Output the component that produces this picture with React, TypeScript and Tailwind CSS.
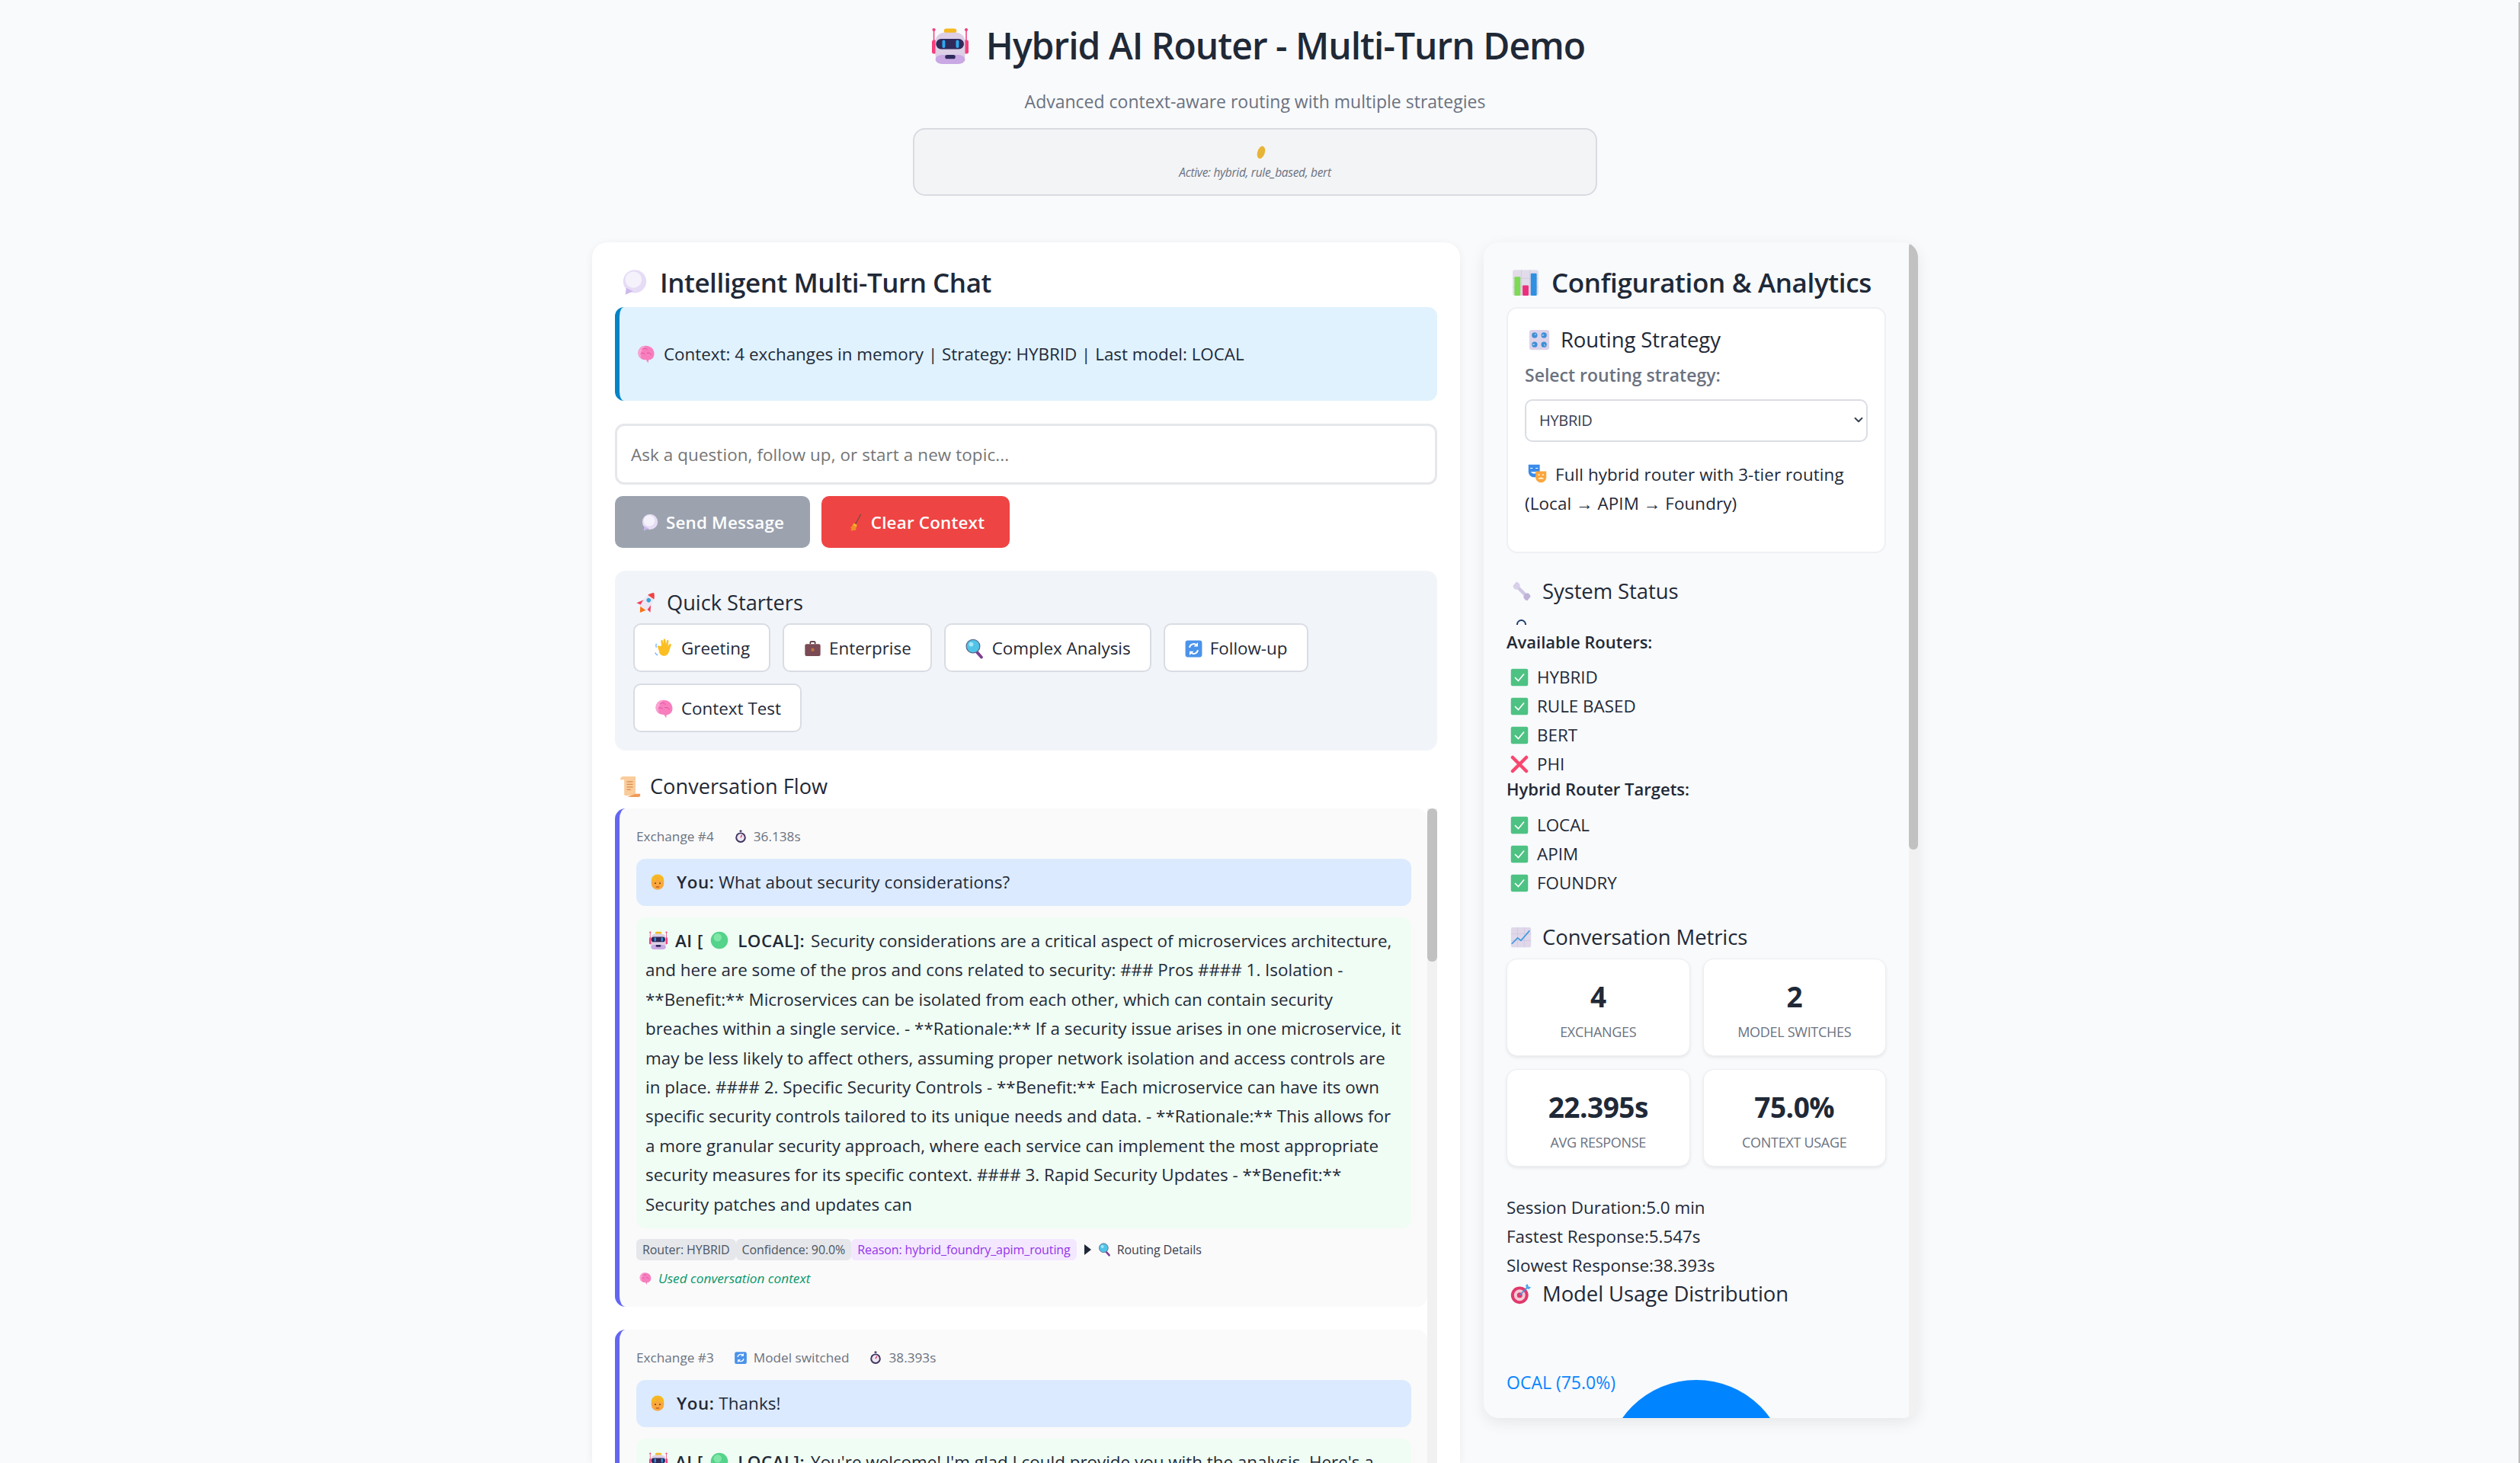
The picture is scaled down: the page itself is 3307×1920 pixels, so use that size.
import React from 'react';
import { ChevronDown } from 'lucide-react';

type IconProps = { s?: number };

const Svg = ({ s = 24, children }: { s?: number; children: React.ReactNode }) => (
  <svg width={s} height={s} viewBox="0 0 32 32" className="inline-block shrink-0 align-[-0.14em]">
    {children}
  </svg>
);

const Robot = ({ s }: IconProps) => (
  <Svg s={s}>
    <path d="M1.7 2v12M30 2v12" stroke="#f43f7a" strokeWidth="1" />
    <circle cx="1.7" cy="2" r="1.4" fill="#f43f7a" />
    <circle cx="30" cy="2" r="1.4" fill="#f43f7a" />
    <rect x="0" y="11" width="4" height="12" rx="1.5" fill="#f43f7a" />
    <rect x="28" y="11" width="4" height="12" rx="1.5" fill="#f43f7a" />
    <rect x="10.5" y="1" width="11" height="4" rx="2" fill="#f5b921" />
    <rect x="3" y="4.5" width="26" height="27.5" rx="8" fill="#dccfe6" />
    <rect x="3" y="24" width="26" height="8" rx="6" fill="#c9a8e4" />
    <rect x="3.5" y="10" width="24.5" height="9" rx="4.5" fill="#2f2a5a" />
    <rect x="9" y="11" width="2.6" height="7" rx="1.3" fill="#2ea8ee" />
    <rect x="21" y="11" width="2.6" height="7" rx="1.3" fill="#2ea8ee" />
    <rect x="11.5" y="24" width="9" height="3.5" rx="1.7" fill="#2f2a5a" />
  </Svg>
);

const Bubble = ({ s }: IconProps) => (
  <Svg s={s}>
    <circle cx="16" cy="14.5" r="13.5" fill="#e6dcf6" />
    <circle cx="14.5" cy="12.5" r="9.5" fill="#f6f2fc" />
    <path d="M6 22l-1 8 9-4z" fill="#cdb9ec" />
  </Svg>
);

const Brain = ({ s }: IconProps) => (
  <Svg s={s}>
    <path d="M15 2c8 0 14 5 14 13 0 6-4 10-9 10l-1 5-3-5C8 25 3 20 3 14 3 7 8 2 15 2z" fill="#f77fbe" />
    <path d="M15 2c-7 0-12 5-12 12 0 4 2 7 5 9-2-6 0-15 7-21z" fill="#f9a3d2" />
    <path d="M9 8c3-2 7-2 9 1M7 15c3-2 5-1 7 1M17 14c3-1 6 0 7 3" stroke="#e0489a" strokeWidth="1.1" fill="none" />
  </Svg>
);

const Broom = ({ s }: IconProps) => (
  <Svg s={s}>
    <path d="M25 1L15 19" stroke="#6d4c41" strokeWidth="1.6" />
    <path d="M13 17l5 3-2 9-9 1 2-5-3 1z" fill="#f28c28" />
    <path d="M13 17l5 3-1 3-6-3z" fill="#f5b921" />
  </Svg>
);

const Rocket = ({ s }: IconProps) => (
  <Svg s={s}>
    <g transform="rotate(35 16 16)">
      <path d="M16 32l-5-8h10z" fill="#f97316" />
      <path d="M11 14l-6 10 6-1zM21 14l6 10-6-1z" fill="#f43f5e" />
      <path d="M16 0c6 5 7 15 5 25H11C9 15 10 5 16 0z" fill="#ece7f3" />
      <path d="M16 0c2.500 2 4 4.500 5 7H11c1-2.500 2.500-5 5-7z" fill="#ef4444" />
      <circle cx="16" cy="12" r="2.800" fill="#38a3dc" />
    </g>
  </Svg>
);

const Wave = ({ s }: IconProps) => (
  <Svg s={s}>
    <path d="M12 11l-1-7c0-2 3-2 3 0l1 5 0-7c0-2 3-2 3 0l1 7 1-5c0-2 3-2 3 0l-1 8 2-3c1-2 3-1 3 1l-3 9c-1 5-4 8-8 8s-8-3-8-8l-2-6c-1-2 2-3 3-1z" fill="#fbbf24" />
    <path d="M4 8C3 10 3 12 4 14M2 22c1 2 2 3 4 4" stroke="#60a5fa" strokeWidth="1.4" fill="none" />
  </Svg>
);

const Case = ({ s }: IconProps) => (
  <Svg s={s}>
    <path d="M11 8V5c0-1 1-2 2-2h6c1 0 2 1 2 2v3h-2V5h-6v3z" fill="#4b3038" />
    <rect x="3" y="8" width="26" height="20" rx="2.500" fill="#7a4a55" />
    <rect x="13.500" y="15" width="5" height="5" rx="1" fill="#c0743c" />
  </Svg>
);

const Lens = ({ s }: IconProps) => (
  <Svg s={s}>
    <path d="M18 20l8 9" stroke="#7b3f8f" strokeWidth="4.500" strokeLinecap="round" />
    <circle cx="13" cy="12" r="10.500" fill="#50c4e8" stroke="#5a6a8a" strokeWidth="1.500" />
    <circle cx="10" cy="9" r="3.500" fill="#a5e6f7" />
  </Svg>
);

const Refresh = ({ s }: IconProps) => (
  <Svg s={s}>
    <rect x="2" y="2" width="28" height="28" rx="4" fill="#4b93ea" />
    <path d="M9 14a7 7 0 0 1 12-4M23 18a7 7 0 0 1-12 4" stroke="#fff" strokeWidth="2.500" fill="none" />
    <path d="M23 5v7h-7zM9 27v-7h7z" fill="#fff" />
  </Svg>
);

const Scroll = ({ s }: IconProps) => (
  <Svg s={s}>
    <path d="M6 1h18v27c0 1 1 2 3 2H10c-2 0-3-1-3-2V6H1c0-3 2-5 5-5z" fill="#f9cc9b" />
    <path d="M24 27h7v3c0 1-1 2-3 2H12z" fill="#f09a56" />
    <path d="M11 9h9M11 13h9M11 17h9M11 21h6" stroke="#d98b4a" strokeWidth="1.500" />
  </Svg>
);

const Watch = ({ s }: IconProps) => (
  <Svg s={s}>
    <rect x="13.500" y="1" width="5" height="4" rx="1" fill="#3f3560" />
    <circle cx="16" cy="18" r="12" fill="#3f3560" />
    <circle cx="16" cy="18" r="8.500" fill="#ece7f2" />
    <path d="M16 18l3-6" stroke="#e11d48" strokeWidth="2" />
  </Svg>
);

const Person = ({ s }: IconProps) => (
  <Svg s={s}>
    <path d="M5 13C5 6 10 2 16 2s11 4 11 11v4H5z" fill="#f5b921" />
    <circle cx="16" cy="18" r="11" fill="#f9a73e" />
    <path d="M6 14c4 0 8-2 10-5 2 3 6 5 10 5V9H6z" fill="#f5b921" />
    <circle cx="12" cy="17.500" r="1.300" fill="#5b3a1e" />
    <circle cx="20" cy="17.500" r="1.300" fill="#5b3a1e" />
    <path d="M13 24h6" stroke="#b4451f" strokeWidth="1.500" />
  </Svg>
);

const Dot = ({ s }: IconProps) => (
  <Svg s={s}>
    <circle cx="16" cy="16" r="15" fill="#54d38a" />
    <circle cx="13" cy="11" r="7" fill="#7fe6a8" />
  </Svg>
);

const Bars = ({ s }: IconProps) => (
  <Svg s={s}>
    <rect x="1" y="1" width="30" height="30" rx="2.500" fill="#e2dcea" />
    <path d="M1 11h30M1 21h30M11 1v30M21 1v30" stroke="#cfc8da" strokeWidth=".7" />
    <rect x="3" y="9" width="7" height="22" rx="1" fill="#7ed957" />
    <rect x="12.500" y="19" width="7" height="12" rx="1" fill="#ec2f7c" />
    <rect x="22" y="5" width="7" height="26" rx="1" fill="#2f8fe0" />
  </Svg>
);

const Knobs = ({ s }: IconProps) => (
  <Svg s={s}>
    <rect x="1" y="1" width="30" height="30" rx="3.500" fill="#dcd3ea" />
    <circle cx="9" cy="9" r="4.200" fill="#3f8fd6" />
    <circle cx="23" cy="9" r="4.200" fill="#3f8fd6" />
    <circle cx="9" cy="23" r="4.200" fill="#3f8fd6" />
    <circle cx="23" cy="23" r="4.200" fill="#3f8fd6" />
    <path d="M9 9l2-2M23 9h-3M9 23H6M23 23l2 2" stroke="#fff" strokeWidth="1" />
  </Svg>
);

const Masks = ({ s }: IconProps) => (
  <Svg s={s}>
    <path d="M1 1h19v11c0 6-4 10-9.500 10S1 18 1 12z" fill="#3b8bea" />
    <path d="M5 13c2 4 9 4 11 0z" fill="#fff" />
    <path d="M4 7h4M13 7h4" stroke="#fff" strokeWidth="1.500" />
    <path d="M13 12h18v10c0 5-4 9-9 9s-9-4-9-9z" fill="#fba63c" />
    <path d="M17 25c2-3 8-3 10 0z" fill="#fff" />
    <path d="M17 18h3M24 18h3" stroke="#fff" strokeWidth="1.500" />
  </Svg>
);

const Wrench = ({ s }: IconProps) => (
  <Svg s={s}>
    <path d="M8 8l16 16" stroke="#cfc6e2" strokeWidth="5.500" />
    <path d="M2 7L7 1c3 0 6 3 6 6s-3 6-6 6-5-3-5-6z" fill="#d8cfe8" />
    <path d="M30 25l-5 6c-3 0-6-3-6-6s3-6 6-6 5 3 5 6z" fill="#bfb3d8" />
  </Svg>
);

const Check = ({ s }: IconProps) => (
  <Svg s={s}>
    <rect x="1" y="1" width="30" height="30" rx="3" fill="#4ec283" />
    <path d="M8 16l6 6 10-12" stroke="#fff" strokeWidth="2.200" fill="none" />
  </Svg>
);

const Cross = ({ s }: IconProps) => (
  <Svg s={s}>
    <path d="M4 4l24 24M28 4L4 28" stroke="#f8476f" strokeWidth="6" strokeLinecap="round" />
  </Svg>
);

const Trend = ({ s }: IconProps) => (
  <Svg s={s}>
    <rect x="1" y="1" width="30" height="30" rx="2.500" fill="#e0d8ea" />
    <path d="M1 11h30M1 21h30M11 1v30M21 1v30" stroke="#cbc2da" strokeWidth=".7" />
    <path d="M2 26l9-9 5 4 13-15" stroke="#3b9ae1" strokeWidth="2" fill="none" />
  </Svg>
);

const Target = ({ s }: IconProps) => (
  <Svg s={s}>
    <circle cx="14" cy="18" r="13" fill="#e0396b" />
    <circle cx="14" cy="18" r="8.500" fill="#f3cbd8" />
    <circle cx="14" cy="18" r="4" fill="#e0396b" />
    <path d="M14 18L27 5" stroke="#4590d8" strokeWidth="2" />
    <path d="M23 3l3-2 1 4 4 1-3 3-4-1z" fill="#4fa8e8" />
  </Svg>
);

const Seed = ({ s }: IconProps) => (
  <Svg s={s}>
    <ellipse cx="16" cy="16" rx="8.500" ry="15" fill="#e8b437" transform="rotate(18 16 16)" />
  </Svg>
);

const QUICK = [
  { icon: <Wave s={27} />, label: 'Greeting' },
  { icon: <Case s={25} />, label: 'Enterprise' },
  { icon: <Lens s={27} />, label: 'Complex Analysis' },
  { icon: <Refresh s={25} />, label: 'Follow-up' },
  { icon: <Brain s={27} />, label: 'Context Test' },
];

const Heading = ({ icon, children, className }: { icon: React.ReactNode; children: React.ReactNode; className: string }) => (
  <h3 className={`flex h-9 items-center text-[27.500px] font-medium tracking-[-0.1px] text-[#1f2937] ${className}`}>
    {icon}
    {children}
  </h3>
);

const Pill = ({ children, purple }: { children: React.ReactNode; purple?: boolean }) => (
  <span
    className={`flex h-7 items-center rounded-md px-2 ${purple ? 'bg-[#f3e8ff] text-[#9333ea]' : 'bg-[#e5e7eb] text-[#4b5563]'}`}
  >
    {children}
  </span>
);

const Exchange = ({
  n,
  time,
  switched,
  question,
  lines,
  footer,
}: {
  n: number;
  time: string;
  switched?: boolean;
  question: string;
  lines: string[];
  footer?: boolean;
}) => (
  <div className="rounded-[14px] border-l-[6px] border-[#6366f1] bg-[#fafafa] pb-[25px] pl-[22px] pt-[25px] pr-[21px]">
    <div className="flex h-6 items-center text-[17.200px] text-[#6b7280]">
      <span>Exchange #{n}</span>
      {switched && (
        <span className="ml-[26px] flex items-center gap-2">
          <Refresh s={18} />
          Model switched
        </span>
      )}
      <span className="ml-[26px] flex items-center gap-2">
        <Watch s={18} />
        {time}
      </span>
    </div>
    <div className="mt-[17px] flex h-[62px] items-center rounded-xl bg-[#dbeafe] pl-[16px] text-[22.400px] tracking-[0.1px]">
      <Person s={24} />
      <b className="ml-[13px] mr-[6px] font-semibold tracking-[0.5px]">You:</b> {question}
    </div>
    <div className="mt-[15px] whitespace-nowrap rounded-xl bg-[#f0fdf4] px-3 pb-[12px] pt-[12px] text-[22.400px] leading-[38.400px]">
      <span className="mr-[10px] ml-[5px]">
        <Robot s={24} />
      </span>
      <b className="font-semibold tracking-[0.5px]">
        AI [<span className="ml-[9px] mr-[6px]"><Dot s={24} /></span> LOCAL]:
      </b>
      <span className="ml-[8px]">{lines[0]}</span>
      {lines.slice(1).map((line) => (
        <React.Fragment key={line}>
          <br />
          {line}
        </React.Fragment>
      ))}
    </div>
    {footer && (
      <>
        <div className="mt-[14px] flex items-center text-[16px] tracking-[-0.1px]">
          <Pill>Router: HYBRID</Pill>
          <Pill>Confidence: 90.0%</Pill>
          <Pill purple>Reason: hybrid_foundry_apim_routing</Pill>
          <span className="ml-[10px] flex items-center text-[#374151]">
            <svg width="9" height="14" viewBox="0 0 9 14" className="mr-[9px]">
              <path d="M0 0l9 7-9 7z" fill="#1f2937" />
            </svg>
            <Lens s={18} />
            <span className="ml-[7px]">Routing Details</span>
          </span>
        </div>
        <div className="mt-[12px] flex h-6 items-center text-[17.200px] italic text-[#059669]">
          <span className="ml-[3px] mr-[8px]">
            <Brain s={18} />
          </span>
          Used conversation context
        </div>
      </>
    )}
  </div>
);

const StatusRow = ({ ok, label }: { ok: boolean; label: string }) => (
  <div className="flex h-[38px] items-center pl-[5px] text-[22.400px] text-[#1f2937]">
    {ok ? <Check s={24} /> : <Cross s={24} />}
    <span className="ml-[11px]">{label}</span>
  </div>
);

const Metric = ({ value, label }: { value: string; label: string }) => (
  <div className="flex h-[128px] flex-col items-center justify-center rounded-[14px] border border-[#eceef2] bg-white pt-[5px] shadow-[0_2px_4px_rgba(0,0,0,0.08)]">
    <div className="text-[37px] font-bold leading-[48px] tracking-[-0.5px] text-[#1f2937]">{value}</div>
    <div className="mt-[10px] text-[18px] uppercase leading-6 tracking-[-0.3px] text-[#6b7280]">{label}</div>
  </div>
);

export default function App() {
  return (
    <div className="relative h-[1920px] w-[3307px] overflow-hidden bg-[#f9fafc] font-['Open_Sans','Noto_Sans',sans-serif] text-[#1f2937]">
      {/* page scrollbar sliver at the right edge */}
      <div className="absolute right-0 top-[3px] h-[1917px] w-0.5 bg-[#bdbdbd]" />

      <div className="flex w-[3294px] flex-col items-center pt-[30px]">
        <h1 className="flex items-center pl-[9px] text-[48px] font-semibold leading-[60px] tracking-[-1px] text-[#1f2937]">
          <Robot s={48} />
          <span className="ml-[23px]">Hybrid AI Router - Multi-Turn Demo</span>
        </h1>
        <p className="mt-7 text-[23px] leading-[30px] text-[#6b7280]">
          Advanced context-aware routing with multiple strategies
        </p>
        <div className="mt-5 flex h-[89px] w-[898px] flex-col items-center justify-center rounded-2xl border-2 border-[#d8dbe0] bg-[#f3f4f6] pt-[2px]">
          <span className="ml-[16px] flex">
            <Seed s={18} />
          </span>
          <span className="mt-[7px] text-[15.500px] italic leading-5 tracking-[-0.3px] text-[#6b7280]">
            Active: hybrid, rule_based, bert
          </span>
        </div>

        <div className="mt-[61px] flex w-[1740px] items-start gap-[31px]">
          {/* chat column */}
          <main className="h-[1602px] w-[1139px] overflow-hidden rounded-t-[20px] bg-white px-[30px] pt-[31px] shadow-[0_2px_12px_rgba(0,0,0,0.06)]">
            <h2 className="flex h-11 items-center text-[35px] font-semibold tracking-[-0.45px] text-[#1f2937]">
              <span className="ml-[8px] mr-[15px] flex">
                <Bubble s={36} />
              </span>
              Intelligent Multi-Turn Chat
            </h2>
            <div className="mt-[10px] flex h-[123px] items-center rounded-xl border-l-[6px] border-[#0284c7] bg-[#e0f2fe] pl-[22px] text-[22.400px] text-[#1f2937]">
              <Brain s={26} />
              <span className="ml-[10px]">Context: 4 exchanges in memory | Strategy: HYBRID | Last model: LOCAL</span>
            </div>
            <input
              placeholder="Ask a question, follow up, or start a new topic..."
              className="mt-[30px] block h-20 w-full rounded-xl border-[3px] border-[#e5e7eb] bg-white px-[18px] text-[22.400px] tracking-[0.1px] placeholder:text-[#757575]"
            />
            <div className="mt-[15px] flex gap-[15px]">
              <button className="flex h-[68px] w-[256px] items-center justify-center gap-[9px] rounded-[10px] bg-[#9ca3af] pt-[2px] text-[22.400px] font-semibold tracking-[0.2px] text-white">
                <Bubble s={24} />
                Send Message
              </button>
              <button className="flex h-[68px] w-[247px] items-center justify-center gap-[8px] rounded-[10px] bg-[#ef4444] pt-[2px] text-[22.400px] font-semibold tracking-[0.2px] text-white">
                <Broom s={24} />
                Clear Context
              </button>
            </div>

            <section className="mt-[30px] rounded-[14px] bg-[#f1f5f9] px-6 pb-6 pt-6">
              <h3 className="flex h-9 items-center text-[27.200px] font-medium text-[#1f2937]">
                <span className="ml-[2px] mr-[10px] flex">
                  <Rocket s={32} />
                </span>
                Quick Starters
              </h3>
              <div className="mt-[9px] flex flex-wrap gap-x-[16px] gap-y-[15px]">
                {QUICK.map((q) => (
                  <button
                    key={q.label}
                    className="flex h-16 items-center gap-[9px] rounded-[10px] border-2 border-[#d9dce3] bg-white px-[25px] pt-[2px] text-[22.400px] text-[#1f2937]"
                  >
                    {q.icon}
                    {q.label}
                  </button>
                ))}
              </div>
            </section>

            <h3 className="mt-[29px] flex h-9 items-center text-[27.200px] font-medium text-[#1f2937]">
              <span className="ml-[6px] mr-[12px] flex">
                <Scroll s={28} />
              </span>
              Conversation Flow
            </h3>

            <div className="mt-[11px] flex items-start">
              <div className="flex w-[1067px] flex-col gap-[30px]">
                <Exchange
                  n={4}
                  time="36.138s"
                  question="What about security considerations?"
                  footer
                  lines={[
                    'Security considerations are a critical aspect of microservices architecture,',
                    'and here are some of the pros and cons related to security: ### Pros #### 1. Isolation -',
                    '**Benefit:** Microservices can be isolated from each other, which can contain security',
                    'breaches within a single service. - **Rationale:** If a security issue arises in one microservice, it',
                    'may be less likely to affect others, assuming proper network isolation and access controls are',
                    'in place. #### 2. Specific Security Controls - **Benefit:** Each microservice can have its own',
                    'specific security controls tailored to its unique needs and data. - **Rationale:** This allows for',
                    'a more granular security approach, where each service can implement the most appropriate',
                    'security measures for its specific context. #### 3. Rapid Security Updates - **Benefit:**',
                    'Security patches and updates can',
                  ]}
                />
                <Exchange
                  n={3}
                  time="38.393s"
                  switched
                  question="Thanks!"
                  lines={["You're welcome! I'm glad I could provide you with the analysis. Here's a"]}
                />
              </div>
              {/* conversation scrollbar */}
              <div className="h-[860px] w-[13px] bg-[#f1f1f1]">
                <div className="h-[201px] rounded-md bg-[#c1c1c1]" />
              </div>
            </div>
          </main>

          {/* config column */}
          <aside className="flex h-[1543px] w-[570px] overflow-hidden rounded-[20px] bg-[#f8fafc] shadow-[0_6px_20px_rgba(0,0,0,0.08)]">
            <div className="w-[558px] shrink-0 px-[30px] pt-[31px]">
              <h2 className="flex h-11 items-center text-[35px] font-semibold tracking-[-0.35px] text-[#1f2937]">
                <span className="ml-[7px] mr-[16px] flex">
                  <Bars s={36} />
                </span>
                Configuration &amp; Analytics
              </h2>

              <div className="mt-[10px] h-[323px] rounded-[14px] border-2 border-[#eef0f4] bg-white px-[22px] pt-[23px]">
                <Heading icon={<span className="ml-[5px] mr-[14px] flex"><Knobs s={28} /></span>} className="">
                  Routing Strategy
                </Heading>
                <div className="mt-[13px] h-[30px] text-[23px] font-semibold leading-[30px] text-[#6b7280]">
                  Select routing strategy:
                </div>
                <div className="relative mt-[17px]">
                  <select
                    defaultValue="HYBRID"
                    className="h-14 w-full appearance-none rounded-[10px] border-2 border-[#dadde3] bg-white pl-[17px] text-[20px] tracking-[-0.3px] text-[#374151]"
                  >
                    <option>HYBRID</option>
                  </select>
                  <ChevronDown size={18} strokeWidth={2.5} className="absolute right-[3px] top-[18px] text-[#374151]" />
                </div>
                <p className="mt-[24px] whitespace-nowrap text-[22.400px] leading-[38px] tracking-[0.1px] text-[#1f2937]">
                  <span className="ml-[4px] mr-[11px]">
                    <Masks s={25} />
                  </span>
                  Full hybrid router with 3-tier routing
                  <br />
                  (Local → APIM → Foundry)
                </p>
              </div>

              <Heading icon={<span className="ml-[7px] mr-[14px] flex"><Wrench s={26} /></span>} className="mt-[32px]">
                System Status
              </Heading>
              <div className="ml-[13px] mt-[19px] h-[7px] w-[13px] overflow-hidden">
                <div className="h-[13px] w-[13px] rounded-full border-2 border-[#1e3a6e] border-b-transparent border-l-[#1e3a6e]" />
              </div>
              <div className="mt-[7px] h-[30px] text-[22px] font-semibold leading-[30px]">Available Routers:</div>
              <div className="mt-[13px]">
                <StatusRow ok label="HYBRID" />
                <StatusRow ok label="RULE BASED" />
                <StatusRow ok label="BERT" />
                <StatusRow ok={false} label="PHI" />
              </div>
              <div className="-mt-[2px] h-[30px] text-[22px] font-semibold leading-[30px]">Hybrid Router Targets:</div>
              <div className="mt-[14px]">
                <StatusRow ok label="LOCAL" />
                <StatusRow ok label="APIM" />
                <StatusRow ok label="FOUNDRY" />
              </div>

              <Heading icon={<span className="ml-[5px] mr-[14px] flex"><Trend s={28} /></span>} className="mt-[34px]">
                Conversation Metrics
              </Heading>
              <div className="mt-[10px] grid grid-cols-2 gap-[17px]">
                <Metric value="4" label="Exchanges" />
                <Metric value="2" label="Model Switches" />
                <Metric value="22.395s" label="Avg Response" />
                <Metric value="75.0%" label="Context Usage" />
              </div>
              <div className="mt-[35px] text-[22.400px] leading-[38px]">
                <div>Session Duration:5.0 min</div>
                <div>Fastest Response:5.547s</div>
                <div>Slowest Response:38.393s</div>
              </div>
              <Heading icon={<span className="ml-[5px] mr-[14px] flex"><Target s={28} /></span>} className="">
                Model Usage Distribution
              </Heading>

              {/* pie chart, clipped by the scrolling panel */}
              <div className="relative h-[400px]">
                <span className="absolute left-0 top-[83px] text-[23px] leading-[30px] text-[#0a84ff]">
                  OCAL (75.0%)
                </span>
                <svg width="238" height="238" viewBox="0 0 238 238" className="absolute left-[130px] top-[95px]">
                  <circle cx="119" cy="119" r="119" fill="#0084ff" />
                </svg>
              </div>
            </div>
            {/* panel scrollbar */}
            <div className="h-full w-3 shrink-0 bg-[#f1f1f1]">
              <div className="h-[797px] rounded-md bg-[#c1c1c1]" />
            </div>
          </aside>
        </div>
      </div>
    </div>
  );
}
